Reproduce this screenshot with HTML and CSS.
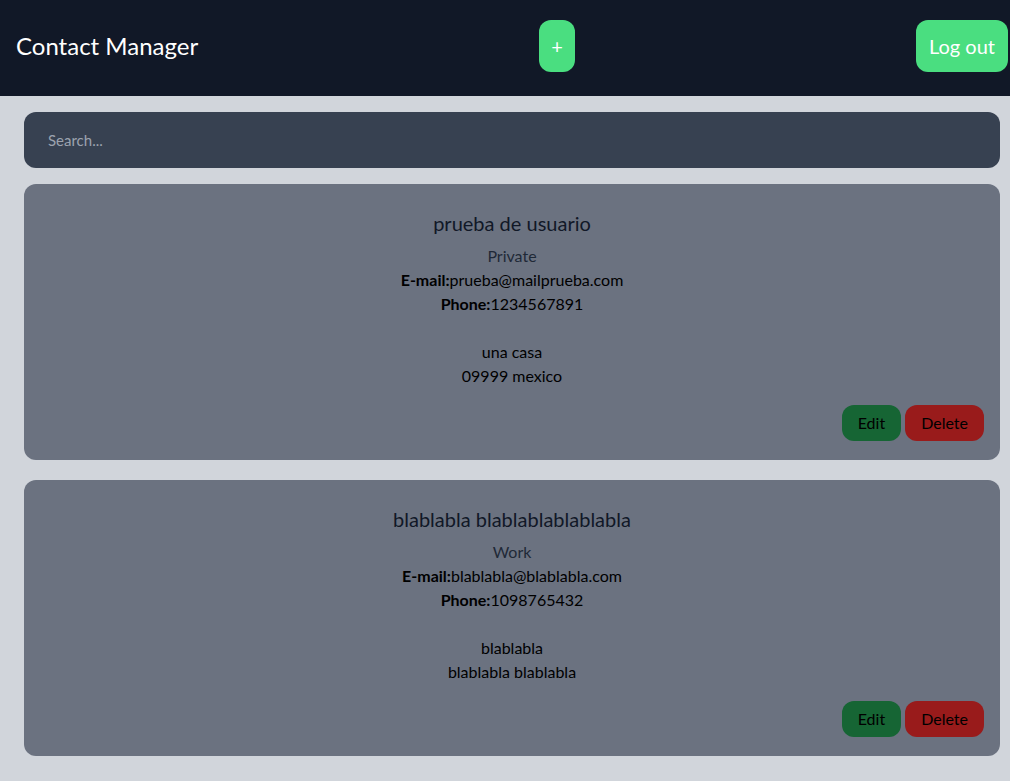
FILE: index.html
```html
<!DOCTYPE html>
<html lang="en">
<head>
<meta charset="utf-8">
<title>Contact Manager</title>
<link rel="stylesheet" href="styles.css">
</head>
<body>
<header class="topbar">
  <h1 class="brand">Contact Manager</h1>
  <button class="btn-green btn-add">+</button>
  <button class="btn-green btn-logout">Log out</button>
</header>
<main class="content">
  <div class="search">
    <input class="search-input" type="text" placeholder="Search...">
  </div>
  <article class="card">
    <h2 class="card-name">prueba de usuario</h2>
    <p class="card-type">Private</p>
    <p class="card-line"><b>E-mail:</b>prueba@mailprueba.com</p>
    <p class="card-line"><b>Phone:</b>1234567891</p>
    <p class="card-line card-gap">una casa</p>
    <p class="card-line">09999 mexico</p>
    <div class="card-actions">
      <button class="btn-edit">Edit</button>
      <button class="btn-delete">Delete</button>
    </div>
  </article>
  <article class="card">
    <h2 class="card-name">blablabla blablablablablabla</h2>
    <p class="card-type">Work</p>
    <p class="card-line"><b>E-mail:</b>blablabla@blablabla.com</p>
    <p class="card-line"><b>Phone:</b>1098765432</p>
    <p class="card-line card-gap">blablabla</p>
    <p class="card-line">blablabla blablabla</p>
    <div class="card-actions">
      <button class="btn-edit">Edit</button>
      <button class="btn-delete">Delete</button>
    </div>
  </article>
</main>
</body>
</html>
```
FILE: styles.css
```css
* { box-sizing: border-box; }
html, body { margin: 0; padding: 0; }
body {
  font-family: "Lato", "Open Sans", sans-serif;
  background: #d1d5db;
  color: #000;
  overflow: hidden;
}
.topbar {
  height: 96px;
  background: #111827;
  display: flex;
  align-items: center;
  justify-content: space-between;
  padding: 0 2px 4px 16px;
}
.brand {
  margin: 0;
  font-size: 24px;
  font-weight: 400;
  line-height: 32px;
  color: #fff;
}
.btn-green {
  border: 0;
  background: #4ade80;
  color: #fff;
  font-family: inherit;
  font-size: 20px;
  line-height: 28px;
  padding: 12px;
  border-radius: 12px;
}
.btn-logout { padding: 12px 13px; }
.content {
  padding: 16px 10px 0 24px;
  display: flex;
  flex-direction: column;
}
.search {
  margin-bottom: 16px;
}
.search-input {
  width: 100%;
  height: 56px;
  border: 0;
  border-radius: 12px;
  background: #374151;
  padding: 0 24px;
  font-family: inherit;
  font-size: 15px;
  color: #fff;
  outline: none;
}
.search-input::placeholder { color: #9ca3af; }
.card {
  background: #6b7280;
  border-radius: 12px;
  height: 276px;
  margin-bottom: 20px;
  padding: 25px 16px 0;
  text-align: center;
  display: flex;
  flex-direction: column;
}
.card-name {
  margin: 0 0 7px;
  font-size: 20px;
  font-weight: 400;
  line-height: 28px;
  color: #111827;
}
.card-type {
  margin: 0;
  font-size: 16px;
  line-height: 24px;
  color: #1f2937;
}
.card-line {
  margin: 0;
  font-size: 16px;
  line-height: 24px;
  color: #000;
}
.card-gap { margin-top: 24px; }
.card-actions {
  display: flex;
  justify-content: flex-end;
  gap: 4px;
  margin-top: 17px;
}
.btn-edit, .btn-delete {
  border: 0;
  font-family: inherit;
  font-size: 16px;
  line-height: 20px;
  padding: 8px 16px;
  border-radius: 12px;
  color: #000;
}
.btn-edit { background: #166534; }
.btn-delete { background: #991b1b; }
```
